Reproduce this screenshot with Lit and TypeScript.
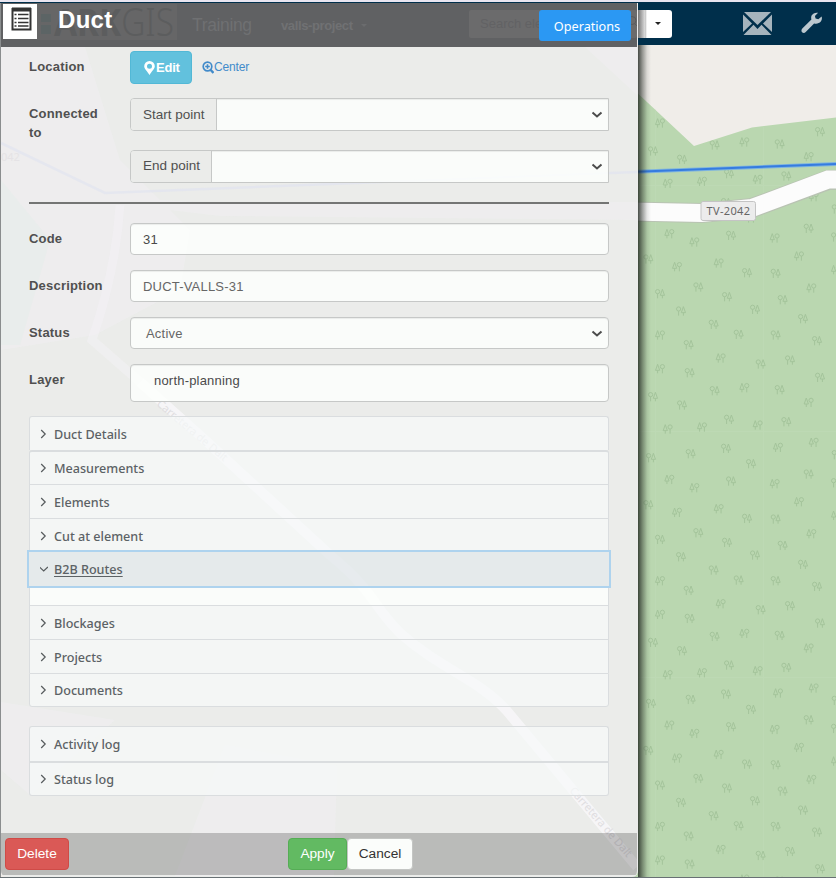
import { LitElement, html, svg, css } from "lit";
import { customElement } from "lit/decorators.js";
import { classMap } from "lit/directives/class-map.js";

// Tree glyph positions inside one 246px map tile (tile origin 636,220).
// a = conifer first, b = broadleaf first. Values are thirds of a pixel.
const TREES = `a100,40 a175,65 b285,45 a416,53 b518,24 b600,50 b37,116 a123,139 a248,128 b333,157 a489,107 b419,159 a600,148
b187,200 b72,220 b273,229 a526,203 b440,238 b357,267 b135,272 b501,295 b233,312 b308,342 b419,344 b543,361 a72,344 b158,373
a254,413 b374,431 b462,419 a72,445 b161,457 b552,471 b236,511 a325,502 b431,508 a518,546 b51,529 b138,554 b279,597 a365,614
b451,604 a95,626 a198,620 b270,684 a426,681 a533,666 b45,712 b164,700 b345,730 b602,703`
  .split(/\s+/)
  .map((t) => {
    const [x, y] = t.slice(1).split(",").map(Number);
    return { flip: t[0] === "a", x: 636 + x / 3, y: 220 + y / 3 };
  });

@customElement("map-view")
export class MapView extends LitElement {
  static styles = css`
    :host { display: block; overflow: hidden; }
    svg { display: block; }
    .label { font: 11px "Noto Sans", sans-serif; fill: #666; }
  `;
  render() {
    return html`<svg width="836" height="833" viewBox="0 45 836 833">
      <defs>
        <clipPath id="wood"><path d="M600 58L694 146L752 127.500L836 117.500V878H600z" /></clipPath>
        <linearGradient id="shade" x1="0" x2="1">
          <stop offset="0" stop-color="#1c221c" stop-opacity=".8" />
          <stop offset=".35" stop-color="#1c221c" stop-opacity=".42" />
          <stop offset=".7" stop-color="#1c221c" stop-opacity=".1" />
          <stop offset="1" stop-color="#1c221c" stop-opacity="0" />
        </linearGradient>
      </defs>
      <rect y="45" width="836" height="833" fill="#f0ede9" />
      <g clip-path="url(#wood)">
        <rect y="45" width="836" height="833" fill="#bad7b0" />
        <path d="M763.500 45V878M655.500 45V878M600 185.500H836M600 431.500H836M600 677.500H836" stroke="#bdd9b4" />
        ${[-245.7, 0, 245.7, 491.4].map((dy) => TREES.map((t) => svg`
          <g transform="translate(${t.x} ${t.y + dy}) scale(${t.flip ? -1 : 1} 1)" fill="none" stroke="#a4c49b" stroke-width="1">
            <circle cx="-2.400" cy="-1.700" r="2.100" />
            <path d="M-2.400 .4V5M2.400 -4L.3 2H4.500zM2.400 2V5" />
          </g>`))}
      </g>
      <path d="M630 211.500L702 213L752 208L828 180H836" fill="none" stroke="#b9c3b3" stroke-width="20" />
      <path d="M630 211.500L702 213L752 208L828 179.500H845" fill="none" stroke="#fcfcfc" stroke-width="18" />
      <path d="M630 172L836 164" stroke="#7eb4df" stroke-width="3.800" fill="none" />
      <path d="M630 172L836 164" stroke="#357ce0" stroke-width="2" fill="none" />
      <rect x="701" y="201.500" width="54.500" height="19" rx="2" fill="#ececec" stroke="#c4c4c4" />
      <text class="label" x="706.500" y="215" textLength="43.500">TV-2042</text>
      <rect x="638" y="45" width="13" height="833" fill="url(#shade)" />
    </svg>`;
  }
}

@customElement("top-bar")
export class TopBar extends LitElement {
  static styles = css`
    :host { display: flex; justify-content: flex-end; height: 43px; background: #002f4b; align-items: flex-start; }
    .search { width: 34px; height: 27.5px; margin: 8px 71px 0 0; background: linear-gradient(90deg, #777, #ddd 7px, #bbb 7px, #fff 9px); border-radius: 0 3px 3px 0; display: flex; align-items: center; justify-content: center; }
    .caret { border: 3px solid transparent; border-top-color: #222; border-bottom: 0; margin-left: 6px; }
    .mail { margin: 10px 29px 0 0; }
    .tool { margin: 10px 13px 0 0; }
  `;
  render() {
    return html`
      <div class="search"><span class="caret"></span></div>
      <svg class="mail" width="29" height="24" viewBox="0 0 29 24" fill="#a6b4bd">
        <path d="M1 0H28L14.500 13z" /><path d="M0 2.500L9 11.500L0 20z" /><path d="M29 2.500L20 11.500L29 20z" />
        <path d="M.5 23L10.500 12.800L14.500 17L18.500 12.800L28.500 23z" />
      </svg>
      <svg class="tool" width="22" height="22" viewBox="0 0 22 22" fill="#bcc8cf">
        <path d="M20.600 4.600L17.300 7.300L14.600 6.600L13.900 4L17.100.8C14.500.3 11.800 1.200 10.600 3.600C10 4.900 10.100 6.300 10.400 7.600L1.300 16.500C.2 17.700.2 19.300 1.100 20.200C2.100 21.200 3.700 21.100 4.700 20L13.100 11.400C15.300 12 18.200 11.600 19.800 9.600C21 8.200 21.200 6.200 20.600 4.600z" />
      </svg>`;
  }
}

@customElement("accordion-list")
export class AccordionList extends LitElement {
  static properties = { items: { attribute: false }, open: {} };
  declare items: [string, number][];
  declare open: string;
  static styles = css`
    :host { display: block; width: 580px; box-sizing: border-box; }
    .row { height: var(--h); box-sizing: border-box; display: flex; align-items: center; border: 1px solid #dadddf; border-bottom-width: 0; background: #f6f9f9b8; padding: 2px 0 0 10px; font: 500 12.600px/20px "Noto Sans", sans-serif; color: #5c6265; }
    .row:first-child { border-radius: 3px 3px 0 0; }
    .row.second { border-radius: 3px 3px 0 0; border-top-width: 2px; padding-top: 1px; }
    .row.last { border-bottom-width: 1px; border-radius: 0 0 3px 3px; }
    .row.open { background: #e3e9ebd0; border: 0; padding-left: 11px; outline: 2px solid #aed3ee; position: relative; }
    .open span { text-decoration: underline; text-underline-offset: 2px; }
    .body { height: 19px; background: #fdfffdd8; border: 1px solid #dadddf; border-width: 0 1px; box-sizing: border-box; }
    svg { width: 8px; height: 10px; margin-right: 6px; fill: none; stroke: #565b5d; stroke-width: 1.2; transform: translateY(-1px); }
  `;
  render() {
    return this.items.map(([name, h], i) => {
      const open = name === this.open;
      return html`<div class=${classMap({ row: true, open, second: i === 1, last: i === this.items.length - 1 })} style="--h:${h}px">
          <svg viewBox="0 0 8 10">${open ? svg`<path d="M-.5 3L3.700 7L7.900 3" />` : svg`<path d="M1.200 1L5.200 5L1.200 9" />`}</svg>
          <span>${name}</span>
        </div>${open ? html`<div class="body"></div>` : ""}`;
    });
  }
}

const chevron = html`<svg width="12" height="8" viewBox="0 0 12 8" fill="none" stroke="#4c4c4c" stroke-width="2"><path d="M1.500 1.500L6 5.500L10.500 1.500" /></svg>`;

@customElement("duct-panel")
export class DuctPanel extends LitElement {
  static styles = css`
    :host { display: flex; flex-direction: column; box-sizing: border-box; width: 637px; height: 874px; background: #ebecea; border-right: 1px solid #ececec; border-radius: 0 0 6px 6px; font: 14px/20px "Liberation Sans", Arial, sans-serif; color: #444; overflow: hidden; }
    header { height: 44px; flex: none; background: #606163; display: flex; z-index: 1; position: relative; }
    .lift { position: relative; }
    .badge { width: 34px; height: 35px; margin: 1px 0 0 2px; background: #fff; display: grid; justify-content: center; padding: 3px 0 0 3px; box-sizing: border-box; }
    h1 { margin: 0 auto 0 21px; font: bold 24px/34px "Liberation Sans", Arial, sans-serif; color: #fff; letter-spacing: .3px; }
    .ops { width: 92px; height: 31px; margin: 7px 6px 0 0; box-sizing: border-box; padding-left: 4px; border-radius: 3px; background: #2b98f3; color: #fff; font: 12.700px/33px "Noto Sans", sans-serif; text-align: center; }
    main { flex: 1; padding: 4px 28px 0; position: relative; }
    .line { display: flex; }
    .name { width: 101px; flex: none; font-weight: bold; font-size: 13px; line-height: 19px; letter-spacing: .2px; color: #505050; padding-top: 6px; box-sizing: border-box; }
    .box { flex: none; box-sizing: border-box; width: 479px; height: 32px; background: #fdfffdd8; border: 1px solid #c6c8c7; border-radius: 4px; box-shadow: inset 0 1px 1px #0001; display: flex; align-items: center; justify-content: space-between; padding: 1px 5px 0 12px; font-size: 13px; color: #666; letter-spacing: .2px; }
    .group { height: 33px; border-radius: 4px 0 0 4px; padding: 0 5px 0 0; }
    .addon { height: 31px; line-height: 31px; box-sizing: border-box; padding-left: 12px; background: #ebecea; border-right: 1px solid #c6c8c7; border-radius: 3px 0 0 3px; font-size: 13.500px; letter-spacing: 0; color: #505050; }
    .start { width: 86px; } .end { width: 81px; line-height: 29px; }
    .edit { width: 62px; height: 33px; box-sizing: border-box; border: 1px solid #52b8d6; border-radius: 4px; background: #62c1dd; color: #fff; font-weight: bold; font-size: 13px; display: flex; align-items: center; padding-left: 13px; gap: 1px; letter-spacing: -.2px; }
    .center { display: flex; align-items: center; height: 32px; margin-left: 10px; color: #428bca; font-size: 12px; letter-spacing: -.15px; }
    .loc { height: 47px; } .conn { height: 52px; } .conn2 { height: 52px; } .f { height: 47px; } .lay { height: 52px; }
    .conn2 .box { margin-left: 101px; }
    hr { height: 2px; border: 0; margin: 0 0 19px; background: #747574; width: 580px; }
    .lay .box { height: 38px; align-items: flex-start; padding: 6px 0 0 23px; color: #4a4a4a; }
    .box.status { padding-left: 15px; }
    .box.dark { color: #4a4a4a; }
    .logs { margin-top: 19px; }
    footer { flex: none; height: 42px; margin-bottom: 2px; background: #00000035; display: flex; align-items: center; padding-left: 4px; position: relative; }
    .btn { box-sizing: border-box; height: 32px; border-radius: 4px; font-size: 13.700px; line-height: 29px; text-align: center; color: #fff; border: 1px solid; }
    .del { width: 64px; background: #da5956; border-color: #cf4b47; margin-right: 219px; }
    .ok { width: 59px; background: #62ba62; border-color: #55ad55; }
    .no { width: 66px; background: #fbfdfb; border-color: #c4c6c4; color: #333; }
    .ghost { position: absolute; left: 0; top: 0; pointer-events: none; }
    .map { left: -1px; top: -3px; }
    .g1 { font: 11px "Noto Sans", sans-serif; fill: #e0dee1; }
    .g2 { font: bold 38px "Noto Sans", sans-serif; fill: #5c5d5e; }
    .thin { font-weight: 300; }
    .g3 { font: 17.500px "Liberation Sans", sans-serif; fill: #6f7072; }
    .g4 { font: bold 13px "Liberation Sans", sans-serif; fill: #707173; }
    .g5 { font: 13px "Liberation Sans", sans-serif; fill: #626264; }
  `;
  ghostHead() {
    return html`<svg class="ghost" width="636" height="44" viewBox="1 3 636 44">
      <rect x="37" y="4" width="140" height="36" fill="#666667" />
      <path d="M41 14h10v8h-10zM41 25h10v9h-10z" fill="#5c6465" />
      <text class="g2" x="54" y="36" textLength="120" lengthAdjust="spacingAndGlyphs">ARK<tspan class="thin">GIS</tspan></text>
      <text class="g3" x="192" y="31" textLength="60">Training</text>
      <text class="g4" x="281" y="30" textLength="72">valls-project</text>
      <path d="M361 24h6l-3 3z" fill="#6b6c6e" />
      <rect x="469" y="10" width="168" height="28" rx="2" fill="#6b6b6c" />
      <text class="g5" x="480" y="28">Search element</text>
      <circle cx="632" cy="20.500" r="4" fill="none" stroke="#5a5b5d" /><path d="M635 24l3 3" stroke="#5a5b5d" />
    </svg>`;
  }
  ghostMap() {
    return html`<svg class="ghost map" width="637" height="878">
      <path d="M1 47H85L120 160L190 230L180 290L95 335L1 350zM585 47L637 95V47zM1 190L210 203L637 202V220L220 216zM1 702L115 720L30 795L1 770zM225 745L337 766L334 876H175z" fill="#f2f0f5" fill-opacity=".4" />
      <path d="M1 180L50 240L20 345H1z" fill="#dcefe9" fill-opacity=".25" />
      <path d="M120 205Q116 270 92 340L140 382" fill="none" stroke="#f4f2f5" stroke-opacity=".5" stroke-width="9" />
      <path d="M140 382L205 440L330 555C375 592 372 605 400 633C440 669 480 680 507 711L637 867" fill="none" stroke="#fdfbff" stroke-opacity=".6" stroke-width="10" />
      <path d="M1 143L105 193L637 172" fill="none" stroke="#dfe1f1" stroke-opacity=".55" stroke-width="2.500" />
      <text class="g1" x="1" y="161" opacity=".6">042</text>
      <text class="g1" transform="translate(156 405) rotate(40)">Carretera de Dalt</text>
      <text class="g1" transform="translate(569 791) rotate(49)">Carretera de Dalt</text>
    </svg>`;
  }
  render() {
    const main: [string, number][] = [["Duct Details", 34], ["Measurements", 34], ["Elements", 34], ["Cut at element", 34], ["B2B Routes", 34], ["Blockages", 34], ["Projects", 34], ["Documents", 34]];
    return html`
      ${this.ghostMap()}
      <header>
        ${this.ghostHead()}
        <div class="badge lift"><svg width="21" height="24" viewBox="0 0 21 24"><path d="M1.500 2H19.500V22.500H1.500z" fill="#fff" stroke="#333" stroke-width="2" /><path d="M1 2.500H20" stroke="#333" stroke-width="4" /><path d="M3.500 7.500h2M3.500 11.500h2M3.500 15.500h2M3.500 19h2M7 7.500h10.500M7 11.500h10.500M7 15.500h10.500M7 19h10.500" stroke="#333" stroke-width="1.500" /></svg></div>
        <h1 class="lift">Duct</h1>
        <div class="ops lift">Operations</div>
      </header>
      <main>
        <div class="line loc"><div class="name">Location</div>
          <div class="edit"><svg width="11" height="14" viewBox="0 0 11 14"><path fill="#fff" fill-rule="evenodd" d="M5.500 0A5.300 5.300 0 0 0 .2 5.300C.2 8 3.400 10.500 5.500 14C7.600 10.500 10.800 8 10.800 5.300A5.300 5.300 0 0 0 5.500 0zM5.500 2.800a2.500 2.500 0 1 1 0 5a2.500 2.500 0 0 1 0-5z" /></svg>Edit</div>
          <div class="center"><svg width="12" height="13" viewBox="0 0 12 13" fill="none" stroke="#428bca"><circle cx="5.500" cy="5.500" r="4.300" stroke-width="1.700" /><path d="M3.200 5.500h4.600M5.500 3.200v4.600" stroke-width="1.600" /><path d="M8.500 8.700L11.500 12" stroke-width="2.400" /></svg>Center</div>
        </div>
        <div class="line conn"><div class="name">Connected<br />to</div><div class="box group"><div class="addon start">Start point</div>${chevron}</div></div>
        <div class="line conn2"><div class="box group"><div class="addon end">End point</div>${chevron}</div></div>
        <hr />
        <div class="line f"><div class="name">Code</div><div class="box dark">31</div></div>
        <div class="line f"><div class="name">Description</div><div class="box">DUCT-VALLS-31</div></div>
        <div class="line f"><div class="name">Status</div><div class="box status">Active${chevron}</div></div>
        <div class="line lay"><div class="name">Layer</div><div class="box">north-planning</div></div>
        <accordion-list .items=${main} .open=${"B2B Routes"}></accordion-list>
        <accordion-list class="logs" .items=${[["Activity log", 35], ["Status log", 35]]}></accordion-list>
      </main>
      <footer><div class="btn del">Delete</div><div class="btn ok">Apply</div><div class="btn no">Cancel</div></footer>`;
  }
}

@customElement("app-root")
export class AppRoot extends LitElement {
  static styles = css`
    :host { display: block; width: 836px; height: 889px; background: #fff; overflow: hidden; }
    .screen { position: relative; height: 878px; box-sizing: border-box; border-top: 2px solid #e9e5f0; background: #5d6668; }
    .screen::after { content: ""; position: absolute; left: 0; right: 0; bottom: 0; height: 1px; background: #687074; }
    .edge { position: absolute; left: 0; top: 1px; width: 1px; height: 875px; background: #8a8d8e; }
    duct-panel { position: absolute; left: 1px; top: 1px; }
  `;
  render() {
    return html`<div class="screen"><top-bar></top-bar><map-view></map-view><div class="edge"></div><duct-panel></duct-panel></div>`;
  }
}
